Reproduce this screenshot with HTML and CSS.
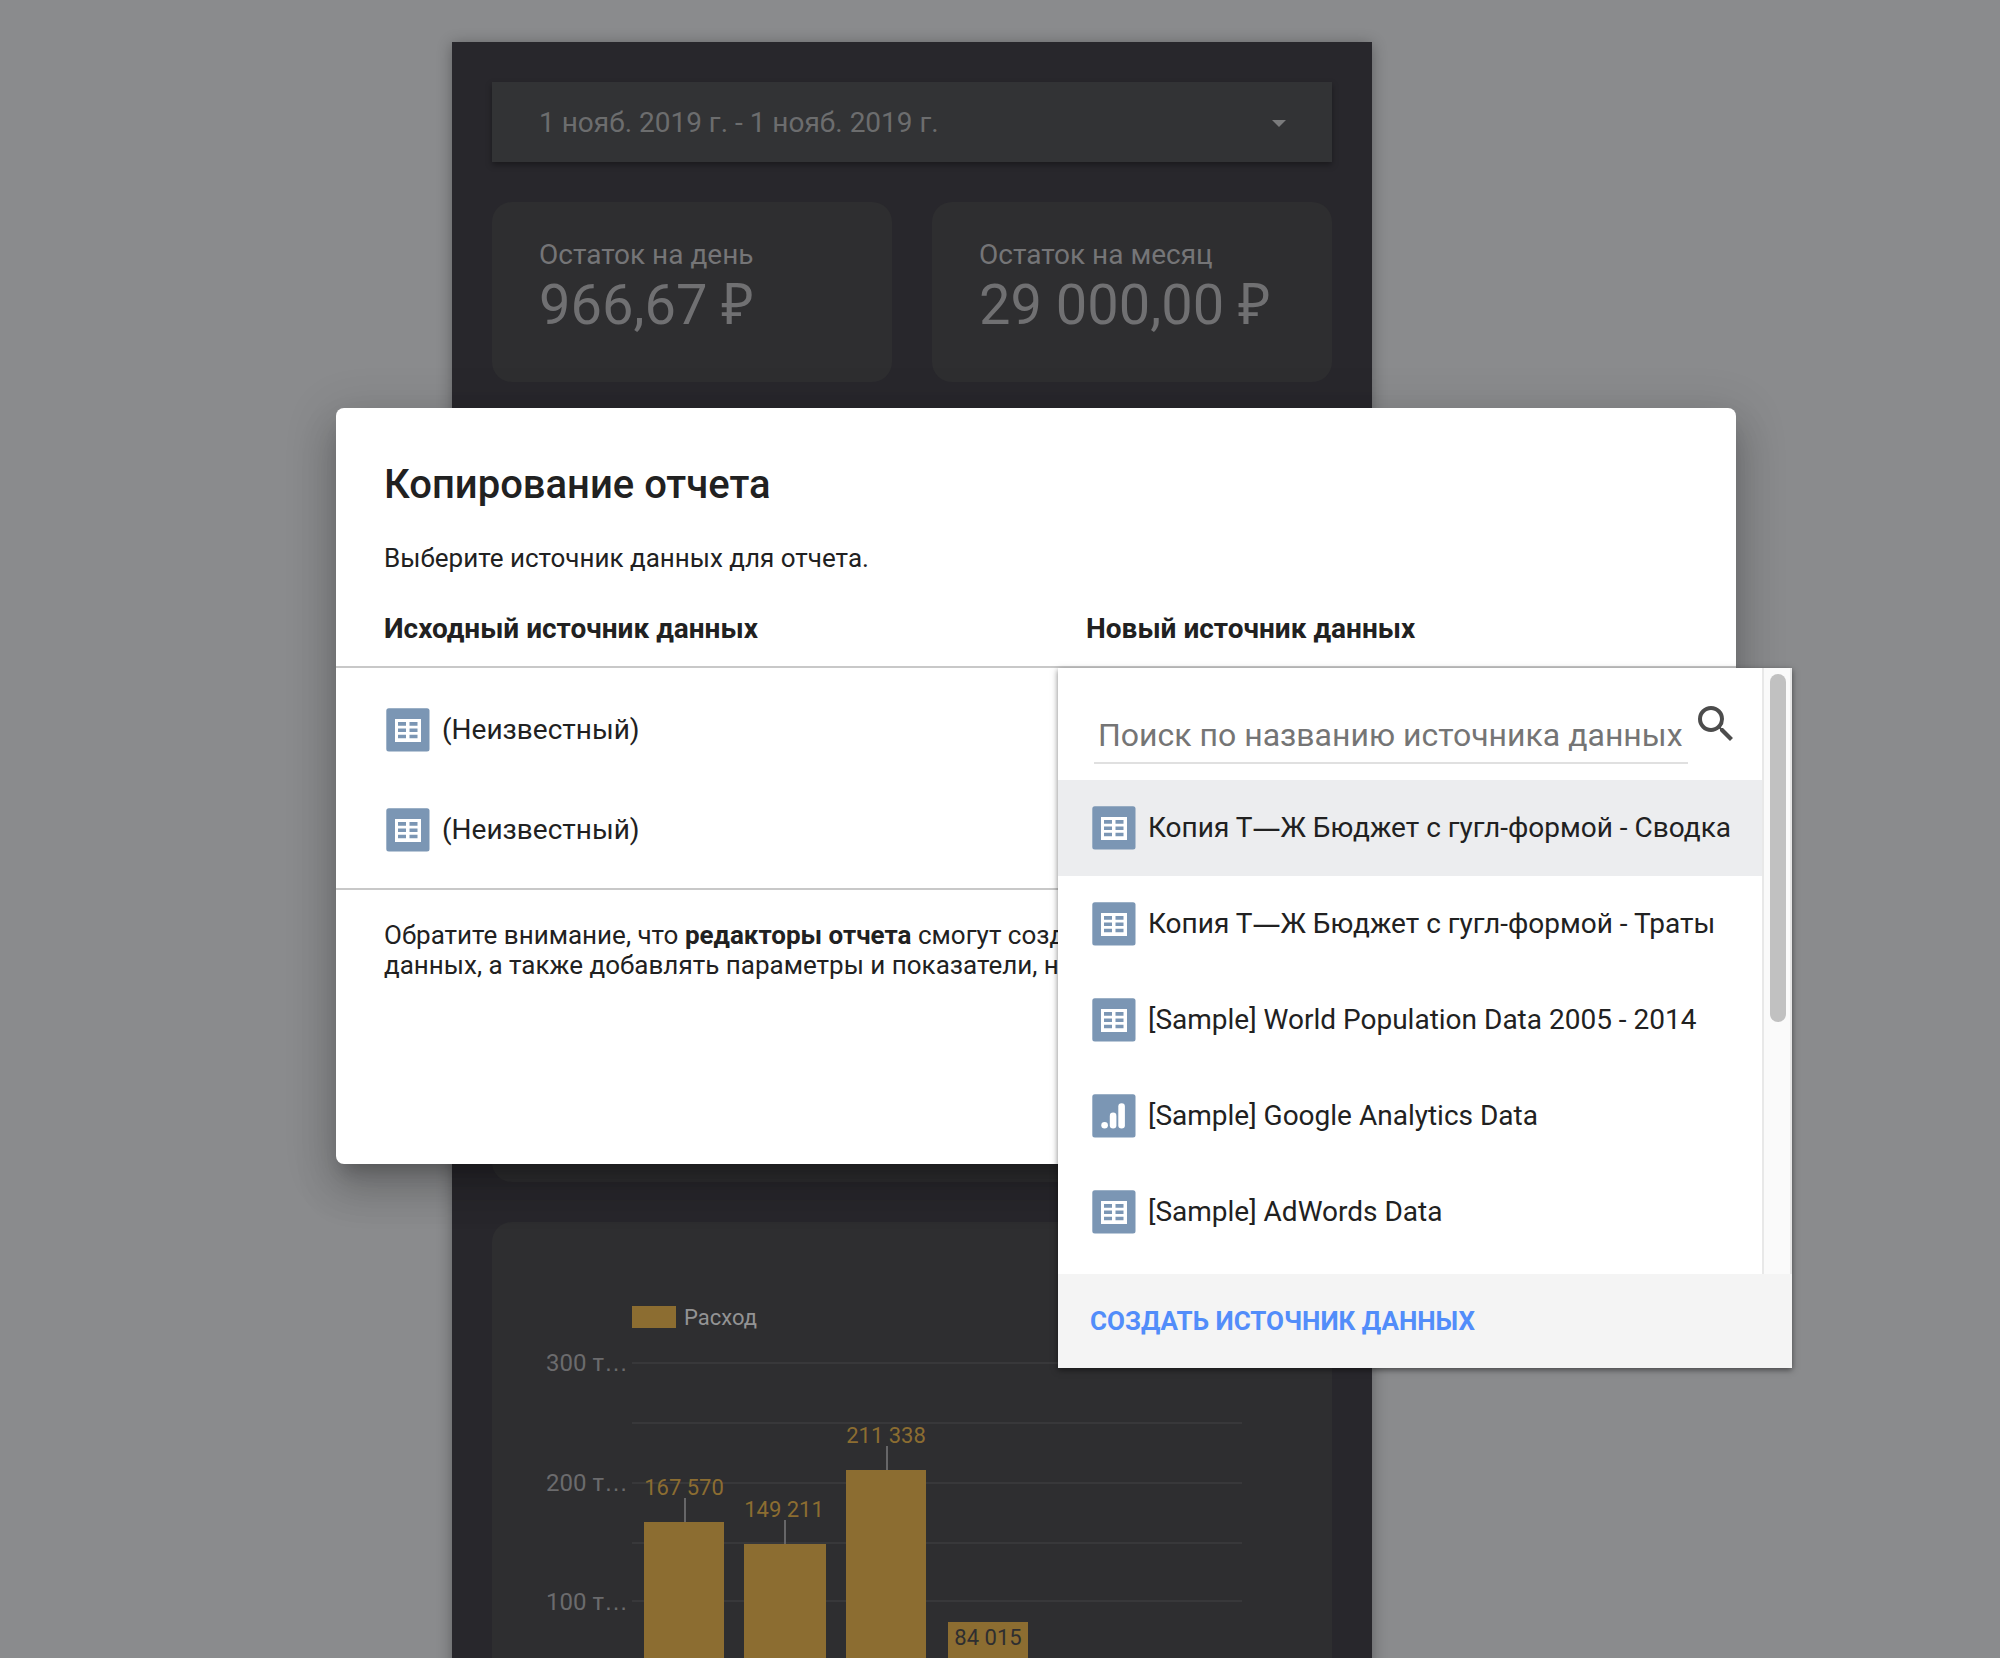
FILE: index.html
```html
<!DOCTYPE html>
<html lang="ru">
<head>
<meta charset="utf-8">
<meta name="viewport" content="width=device-width, initial-scale=1">
<title>Копирование отчета</title>
<link rel="stylesheet" href="styles.css">
</head>
<body>
<svg class="sprite" aria-hidden="true">
  <symbol id="icon-table" viewBox="0 0 44 44">
    <rect x=".3" y=".3" width="43.2" height="43.2" rx="2.5" fill="#7b96b4"/>
    <rect x="9" y="11" width="26" height="23" fill="#fff"/>
    <path fill="#7b96b4" d="M12 14h8v3.7h-8zM23.5 14h8v3.7h-8zM12 20.5h8v3.5h-8zM23.5 20.5h8v3.5h-8zM12 26.7h8v3.6h-8zM23.5 26.7h8v3.6h-8z"/>
  </symbol>
  <symbol id="icon-analytics" viewBox="0 0 44 44">
    <rect x=".3" y=".3" width="43.2" height="43.2" rx="2.5" fill="#7b96b4"/>
    <circle cx="12.6" cy="31.3" r="3.3" fill="#fff"/>
    <rect x="17.8" y="18.6" width="6.6" height="16" rx="3.3" fill="#fff"/>
    <rect x="26.3" y="9.3" width="6.6" height="25.3" rx="3.3" fill="#fff"/>
  </symbol>
</svg>

<main class="canvas">
  <div class="report">
    <button class="date-range" type="button">
      <span>1 нояб. 2019 г. - 1 нояб. 2019 г.</span>
      <svg class="caret" viewBox="0 0 14 7" aria-hidden="true"><path d="M0 0h14L7 7z"/></svg>
    </button>
    <div class="scorecards">
      <section class="card scorecard">
        <div class="score-label">Остаток на день</div>
        <div class="score-value">966,67 <span class="currency">₽</span></div>
      </section>
      <section class="card scorecard">
        <div class="score-label">Остаток на месяц</div>
        <div class="score-value">29 000,00 <span class="currency">₽</span></div>
      </section>
    </div>
    <section class="card filler"></section>
    <section class="card chart-card">
      <svg class="chart" viewBox="0 0 840 520" role="img" aria-label="Расход">
        <rect class="bar" x="140" y="84" width="44" height="22"/>
        <text class="legend" x="192" y="103">Расход</text>
        <path class="grid" d="M140 141H750M140 201H750M140 261H750M140 321H750M140 379H750"/>
        <g class="axis">
          <text x="136" y="149">300 т<tspan class="ellipsis">…</tspan></text>
          <text x="136" y="269">200 т<tspan class="ellipsis">…</tspan></text>
          <text x="136" y="388">100 т<tspan class="ellipsis">…</tspan></text>
        </g>
        <path class="bar" d="M152 300h80v220h-80zM252 322h82v198h-82zM354 248h80v272h-80zM456 400h80v120h-80z"/>
        <path class="stem" d="M193 276v24M293 298v24M395 224v24"/>
        <g class="value">
          <text x="192" y="273">167 570</text>
          <text x="292" y="295">149 211</text>
          <text x="394" y="221">211 338</text>
          <text class="inside" x="496" y="423">84 015</text>
        </g>
      </svg>
    </section>
  </div>
</main>

<div class="overlay">
  <div class="dialog" role="dialog" aria-labelledby="dialog-title">
    <h1 class="dialog-title" id="dialog-title">Копирование отчета</h1>
    <p class="dialog-lead">Выберите источник данных для отчета.</p>
    <div class="sources">
      <table class="source-table">
        <thead>
          <tr><th class="col-old">Исходный источник данных</th><th>Новый источник данных</th></tr>
        </thead>
        <tbody>
          <tr><td><div class="source"><svg class="source-icon"><use href="#icon-table"/></svg>(Неизвестный)</div></td><td></td></tr>
          <tr><td><div class="source"><svg class="source-icon"><use href="#icon-table"/></svg>(Неизвестный)</div></td><td></td></tr>
        </tbody>
      </table>
      <div class="picker">
        <div class="picker-body">
          <div class="picker-main">
            <div class="search">
              <input class="search-input" type="text" placeholder="Поиск по названию источника данных" aria-label="Поиск по названию источника данных">
              <svg class="search-icon" viewBox="0 0 24 24" aria-hidden="true"><path d="M15.5 14h-.79l-.28-.27A6.471 6.471 0 0 0 16 9.5 6.5 6.5 0 1 0 9.5 16c1.61 0 3.09-.59 4.23-1.57l.27.28v.79l5 4.99L20.49 19l-4.99-5zm-6 0C7.01 14 5 11.99 5 9.5S7.01 5 9.5 5 14 7.01 14 9.5 11.99 14 9.5 14z"/></svg>
            </div>
            <button class="option active" type="button"><svg class="source-icon"><use href="#icon-table"/></svg><span>Копия Т<span class="dash">—</span>Ж Бюджет с гугл-формой - Сводка</span></button>
            <button class="option" type="button"><svg class="source-icon"><use href="#icon-table"/></svg><span>Копия Т<span class="dash">—</span>Ж Бюджет с гугл-формой - Траты</span></button>
            <button class="option" type="button"><svg class="source-icon"><use href="#icon-table"/></svg><span>[Sample] World Population Data 2005 - 2014</span></button>
            <button class="option" type="button"><svg class="source-icon"><use href="#icon-analytics"/></svg><span>[Sample] Google Analytics Data</span></button>
            <button class="option" type="button"><svg class="source-icon"><use href="#icon-table"/></svg><span>[Sample] AdWords Data</span></button>
          </div>
          <div class="scroll-track"><div class="scroll-thumb"></div></div>
        </div>
        <div class="picker-footer"><button class="create" type="button">СОЗДАТЬ ИСТОЧНИК ДАННЫХ</button></div>
      </div>
    </div>
    <p class="dialog-note">Обратите внимание, что <b>редакторы отчета</b> смогут создавать<br>данных, а также добавлять параметры и показатели, не</p>
  </div>
</div>
</body>
</html>
```
FILE: styles.css
```css
* { box-sizing: border-box; }

body {
  margin: 0;
  height: 100vh;
  overflow: hidden;
  position: relative;
  background: #8a8b8d;
  color: #212121;
  font-family: Roboto, "Liberation Sans", sans-serif;
  font-size: 28px;
  line-height: 32px;
}

button {
  border: 0;
  margin: 0;
  font: inherit;
  color: inherit;
  text-align: left;
  cursor: pointer;
}

.sprite { position: absolute; width: 0; height: 0; }

/* Report under the backdrop */
.canvas {
  display: flex;
  align-items: flex-start;
  justify-content: center;
  height: 100%;
  overflow: hidden;
  padding: 42px 176px 0 0;
}

.report {
  display: flex;
  flex-direction: column;
  gap: 40px;
  width: 100%;
  max-width: 920px;
  padding: 40px;
  background: #28272c;
  box-shadow: 0 2px 14px rgba(0, 0, 0, .32);
}

.date-range {
  display: flex;
  align-items: center;
  justify-content: space-between;
  height: 80px;
  padding: 2px 46px 0 47px;
  background: #323335;
  color: #6c6d6e;
  box-shadow: 0 3px 6px rgba(0, 0, 0, .35);
}

.caret { width: 14px; height: 7px; fill: #7a7b7c; }

.scorecards { display: flex; gap: 40px; }

.card { border-radius: 20px; background: #2e2e30; }

.scorecard { flex: 1; height: 180px; padding: 37px 47px; }
.score-label { color: #757577; }
.score-value { color: #707072; font-size: 56px; line-height: 68px; }
.currency { font-family: "Noto Sans", sans-serif; line-height: 1; }

.filler { height: 760px; }

.chart { display: block; width: 100%; font-size: 22px; }
.bar { fill: #8c6d31; }
.legend { fill: #939394; }
.grid { stroke: #38383a; stroke-width: 2; }
.stem { stroke: #666668; stroke-width: 2; }
.axis { fill: #6b6b6d; font-size: 24px; text-anchor: end; }
.ellipsis { font-family: "Liberation Sans", sans-serif; }
.value { fill: #8c6d31; text-anchor: middle; }
.inside { fill: #2e2e30; }

/* Dialog */
.overlay {
  position: absolute;
  inset: 0;
  display: flex;
  align-items: center;
  justify-content: center;
  padding: 0 0 86px 72px;
}

.dialog {
  width: 1400px;
  max-width: 100%;
  padding: 53px 0 184px;
  border-radius: 8px;
  background: #fff;
  box-shadow: 0 14px 16px -8px rgba(0, 0, 0, .2), 0 26px 38px 4px rgba(0, 0, 0, .14), 0 10px 48px 8px rgba(0, 0, 0, .12);
}

.dialog-title {
  margin: 0 48px;
  font-size: 40px;
  font-weight: 500;
  line-height: 48px;
}

.dialog-lead {
  margin: 34px 48px 40px;
  font-size: 26px;
  line-height: 30px;
}

.sources { position: relative; }

.source-table {
  width: 100%;
  border-collapse: separate;
  border-spacing: 0;
  border-bottom: 2px solid #c8c8c8;
}

.source-table th {
  padding: 0 0 21px;
  border-bottom: 2px solid #c8c8c8;
  text-align: left;
  font-weight: 700;
}

.source-table .col-old { width: 750px; padding-left: 48px; }
.source-table td { padding: 0 0 0 50px; }
.source-table tbody tr:first-child td { padding-top: 12px; }
.source-table tbody tr:last-child td { padding-bottom: 8px; }

.source { display: flex; align-items: center; gap: 12px; height: 100px; }
.source-icon { flex: none; width: 44px; height: 44px; }

.dialog-note {
  margin: 30px 48px 0;
  font-size: 26px;
  line-height: 30px;
}

/* Source picker menu */
.picker {
  position: absolute;
  top: 55px;
  left: 722px;
  width: 734px;
  background: #fff;
  box-shadow: 0 2px 6px rgba(0, 0, 0, .5);
}

.picker-body { display: flex; }
.picker-main { flex: 1; min-width: 0; padding-bottom: 14px; }

.search {
  display: flex;
  align-items: flex-start;
  gap: 4px;
  height: 112px;
  padding: 32px 22px 0 36px;
}

.search-input {
  flex: 1;
  min-width: 0;
  height: 50px;
  margin-top: 14px;
  padding: 0 4px 6px;
  border: 0;
  border-bottom: 2px solid #e0e0e0;
  border-radius: 0;
  background: none;
  font: inherit;
  font-size: 32px;
  outline: 0;
}

.search-input::placeholder { color: #757575; opacity: 1; }
.search-icon { flex: none; width: 48px; height: 48px; fill: #4c4c4c; }

.option {
  display: flex;
  align-items: center;
  gap: 12px;
  width: 100%;
  height: 96px;
  padding: 0 0 0 34px;
  background: none;
  white-space: nowrap;
}

.option.active { background: #ecedef; }
.dash { font-family: "Noto Sans", sans-serif; line-height: 1; }

.scroll-track {
  flex: none;
  width: 30px;
  padding: 6px 4px 0 6px;
  border: solid #e8e8e8;
  border-width: 0 2px;
  background: #fafafa;
}

.scroll-thumb { width: 16px; height: 348px; border-radius: 8px; background: #c1c1c1; }

.picker-footer {
  display: flex;
  align-items: center;
  height: 94px;
  padding: 0 32px;
  background: #f4f4f4;
}

.create {
  padding: 0;
  background: none;
  color: #528dfa;
  font-size: 26px;
  font-weight: 700;
}
```
